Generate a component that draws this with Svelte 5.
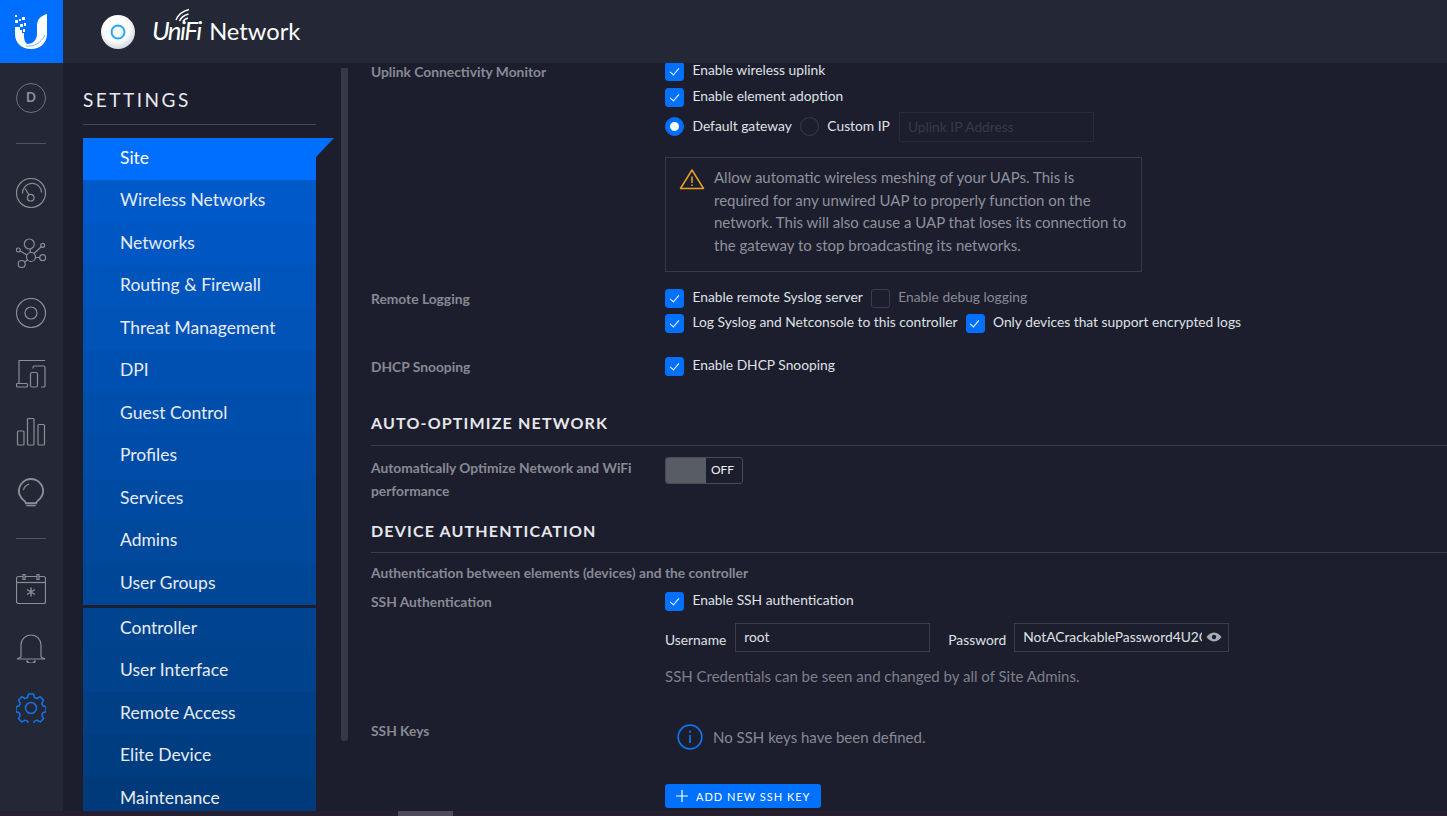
<script>
  const blue = [
    ['Site', '#006fff'],
    ['Wireless Networks', '#0059c8'],
    ['Networks', '#0057c3'],
    ['Routing & Firewall', '#0055bd'],
    ['Threat Management', '#0052b7'],
    ['DPI', '#0050b1'],
    ['Guest Control', '#004eab'],
    ['Profiles', '#004ca6'],
    ['Services', '#004aa1'],
    ['Admins', '#00489b'],
    ['User Groups', '#004696']
  ];
  const lower = [
    ['Controller', '#004490'],
    ['User Interface', '#00428b'],
    ['Remote Access', '#003f85'],
    ['Elite Device', '#003d80'],
    ['Maintenance', '#003a7a']
  ];
</script>

<div class="app">
  <a class="logo" href="#top" aria-label="Home">
    <svg width="64" height="64" viewBox="0 0 64 64">
      <path fill="#fff" d="M15 27h5v3h2v3h2v2c0 5 1 7 3 9C33 44 37 40 37 34v-8c0-6 3-10 10-12v20c0 9-7 15-16 15s-16-6-16-15z" />
      <path fill="none" stroke="#7db5ff" stroke-width="1" d="M26 46c8 1 15-3 19-11" />
      <path fill="#fff" d="M15 15h2v2h-2zM19 19h2v2h-2zM15 20h3v3h-3zM22 17h3v3h-3zM20 24h3v3h-3zM24 23h2v3h-2zM23 29h2v3h-2z" />
    </svg>
  </a>

  <header>
    <svg class="puck" width="36" height="36" viewBox="0 0 36 36">
      <defs>
        <radialGradient id="puck-fill" cx="45%" cy="40%" r="60%">
          <stop offset="0.6" stop-color="#ffffff" />
          <stop offset="1" stop-color="#d5d8df" />
        </radialGradient>
      </defs>
      <circle cx="18" cy="18" r="17" fill="url(#puck-fill)" />
      <circle cx="18" cy="18" r="6.500" fill="#f4f8fc" stroke="#2aa5f2" stroke-width="2" />
    </svg>
    <div class="brand">
      <span class="unifi">UniFi</span>
      <svg class="arcs" width="17" height="14" viewBox="0 0 17 14" fill="none" stroke="#fff" stroke-width="1.600">
        <path d="M1 12c2-5 7-9 13-10.500M4.500 13c1.500-3.500 5-6 9-7M8 13.500c1-1.800 2.800-3 5-3.500" />
      </svg>
      <span class="network">Network</span>
    </div>
  </header>

  <nav class="rail">
    <div class="device">D</div>
    <hr />
    <svg class="ic first" viewBox="0 0 30 30">
      <circle cx="15" cy="15" r="14.500" />
      <path d="M6.500 15.500a9.500 9.500 0 0 1 19.200-1" />
      <path d="M9 10.500l4.200 6.500" />
      <circle cx="14.700" cy="19.700" r="3.300" />
    </svg>
    <svg class="ic" viewBox="0 0 30 30">
      <circle cx="15" cy="19" r="4.500" />
      <circle cx="13.300" cy="6" r="5" />
      <circle cx="26.700" cy="19.700" r="3" />
      <circle cx="26.700" cy="7.300" r="2" />
      <circle cx="2.300" cy="12" r="2" />
      <circle cx="5.700" cy="26" r="3.500" />
      <path d="M14 11l.5 3.500M19.500 19.500h4.200M18 15.500l7.300-6.700M10.800 17L4 12.800M11.500 22L8.500 24" />
    </svg>
    <svg class="ic" viewBox="0 0 30 30">
      <circle cx="15" cy="15" r="14.500" />
      <circle cx="15" cy="15" r="6" />
    </svg>
    <svg class="ic laptop" viewBox="0 0 30 30">
      <path d="M3 25V1.500h26" />
      <rect x="0.500" y="24.500" width="11" height="3.500" rx="1" />
      <rect x="14.500" y="13.500" width="7" height="14.500" rx="1.500" />
      <path d="M17 9.500v-1a1.500 1.500 0 0 1 1.500-1.500h9a1.500 1.500 0 0 1 1.500 1.500v18a1.500 1.500 0 0 1-1.500 1.500h-2.500" />
    </svg>
    <svg class="ic bars" viewBox="0 0 30 30">
      <rect x="1.500" y="14" width="6.500" height="14" rx="1" />
      <rect x="11.500" y="1.500" width="6.500" height="26.500" rx="1" />
      <rect x="22" y="7.500" width="6.500" height="20.500" rx="1" />
    </svg>
    <svg class="ic bulb" viewBox="0 0 30 30">
      <path stroke-width="2" d="M9.500 26c0-3-7.500-5-7.500-13a13 13 0 0 1 26 0c0 8-7.500 10-7.500 13z" />
      <path d="M7 12a8 8 0 0 1 6-6.500" />
      <path d="M10 28.500h10" stroke-width="1.500" />
    </svg>
    <hr class="low" />
    <svg class="ic cal" viewBox="0 0 30 30">
      <rect x="0.500" y="2.500" width="29" height="27" rx="2" />
      <path d="M0.500 8.500h29" />
      <path fill="#242735" d="M7 0.500h2v5h-2zM21 0.500h2v5h-2z" />
      <path stroke-width="1.400" d="M15 13.500v9M11 15.500l8 5M19 15.500l-8 5" />
    </svg>
    <svg class="ic bell" viewBox="0 0 30 30">
      <path d="M5 24V12a10 10 0 0 1 20 0v12l4 2H1z" />
      <path stroke-width="2" d="M11 27.500a4 3 0 0 0 8 0" />
    </svg>
    <svg class="ic gear" viewBox="0 0 30 30">
      <path d="M12.500 1h5l1 3.500 2.500 1 3.200-1.800 3.300 3.400-1.700 3.200 1 2.500 3.200 1v5l-3.200 1-1 2.500 1.700 3.200-3.300 3.400-3.200-1.800-2.500 1-1 3.300h-5l-1-3.300-2.500-1-3.200 1.800-3.300-3.400 1.700-3.200-1-2.500-3.200-1v-5l3.200-1 1-2.500-1.700-3.200 3.300-3.400 3.200 1.800 2.500-1z" stroke-linejoin="round" />
      <circle cx="15" cy="15" r="5.500" />
    </svg>
  </nav>

  <div class="body">
    <aside>
      <h2>SETTINGS</h2>
      <ul class="group">
        {#each blue as [name, bg], i}
          <li class:active={i === 0} style="background:{bg}">{name}</li>
        {/each}
      </ul>
      <ul class="group second">
        {#each lower as [name, bg]}
          <li style="background:{bg}">{name}</li>
        {/each}
      </ul>
    </aside>
    <div class="thumb"></div>

    <main>
      <div class="row first-row">
        <div class="label">Uplink Connectivity Monitor</div>
        <div>
          <div class="line"><span class="cb on"></span><span>Enable wireless uplink</span></div>
          <div class="line"><span class="cb on"></span><span>Enable element adoption</span></div>
          <div class="line radio-line">
            <span class="rd on"></span><span>Default gateway</span>
            <span class="rd"></span><span>Custom IP</span>
            <input class="uplink" placeholder="Uplink IP Address" disabled />
          </div>
          <div class="warn">
            <svg width="26" height="22" viewBox="0 0 26 22" fill="none" stroke="#e8a020" stroke-width="1.500">
              <path d="M13 2L1.500 20.500h23z" stroke-linejoin="round" />
              <path d="M13 8.500v6.500M13 16.500v1.500" />
            </svg>
            <p>Allow automatic wireless meshing of your UAPs. This is required for any unwired UAP to properly function on the network. This will also cause a UAP that loses its connection to the gateway to stop broadcasting its networks.</p>
          </div>
        </div>
      </div>

      <div class="row logging">
        <div class="label">Remote Logging</div>
        <div>
          <div class="line short">
            <span class="cb on"></span><span>Enable remote Syslog server</span>
            <span class="cb"></span><span class="muted">Enable debug logging</span>
          </div>
          <div class="line short">
            <span class="cb on"></span><span>Log Syslog and Netconsole to this controller</span>
            <span class="cb on"></span><span>Only devices that support encrypted logs</span>
          </div>
        </div>
      </div>

      <div class="row dhcp">
        <div class="label">DHCP Snooping</div>
        <div class="line short"><span class="cb on"></span><span>Enable DHCP Snooping</span></div>
      </div>

      <h3 class="optimize">AUTO-OPTIMIZE NETWORK</h3>
      <div class="row opt-row">
        <div class="label tall">Automatically Optimize Network and WiFi performance</div>
        <div class="toggle"><span class="knob"></span><span class="off">OFF</span></div>
      </div>

      <h3 class="auth">DEVICE AUTHENTICATION</h3>
      <div class="label auth-note">Authentication between elements (devices) and the controller</div>
      <div class="row ssh">
        <div class="label">SSH Authentication</div>
        <div>
          <div class="line short"><span class="cb on"></span><span>Enable SSH authentication</span></div>
          <div class="creds">
            <label for="ssh-user">Username</label>
            <input id="ssh-user" class="user" value="root" readonly />
            <label for="ssh-pass" class="pass-label">Password</label>
            <div class="pass-wrap">
              <input id="ssh-pass" class="pass" value="NotACrackablePassword4U2C" readonly />
              <svg class="eye" width="16" height="12" viewBox="0 0 16 12">
                <path fill="#a9abb1" d="M8 1.500c3.500 0 6 2.500 7.500 4.500C14 8 11.500 10.500 8 10.500S2 8 .5 6C2 4 4.500 1.500 8 1.500z" />
                <circle cx="8" cy="6" r="2.200" fill="#1c1e2d" />
              </svg>
            </div>
          </div>
          <div class="hint">SSH Credentials can be seen and changed by all of Site Admins.</div>
        </div>
      </div>

      <div class="row keys">
        <div class="label">SSH Keys</div>
        <div class="empty">
          <svg width="26" height="26" viewBox="0 0 26 26" fill="none" stroke="#0f74ee" stroke-width="1.700">
            <circle cx="13" cy="13" r="11.800" />
            <path d="M13 11v8M13 6.500v2.300" />
          </svg>
          <span>No SSH keys have been defined.</span>
        </div>
      </div>

      <div class="row btn-row">
        <div></div>
        <button>
          <svg width="12" height="12" viewBox="0 0 12 12" stroke="#fff" stroke-width="1.200"><path d="M6 0v12M0 6h12" /></svg>
          ADD NEW SSH KEY
        </button>
      </div>
    </main>
  </div>

  <div class="hbar"><span></span></div>
</div>

<style>
  :global(body) {
    margin: 0;
    background: #1c1e2d;
    overflow: hidden;
  }

  .app {
    display: grid;
    grid-template-columns: 63px 1fr;
    grid-template-rows: 63px 748px 5px;
    width: 1447px;
    height: 816px;
    overflow: hidden;
    font-family: Lato, sans-serif;
    font-size: 13.800px;
    color: #dfe1e5;
  }

  .logo {
    background: #006fff;
    display: block;
    overflow: hidden;
  }

  .logo svg {
    display: block;
  }

  header {
    background: #242735;
    display: flex;
    align-items: center;
    padding-left: 37px;
  }

  .brand {
    position: relative;
    display: flex;
    align-items: baseline;
    margin-left: 16px;
    padding-bottom: 4px;
    color: #fff;
  }

  .unifi {
    font-size: 26px;
    font-style: italic;
    font-weight: 400;
    letter-spacing: -1.600px;
  }

  .arcs {
    position: absolute;
    left: 23px;
    top: -6px;
  }

  .network {
    font-size: 23.700px;
    font-weight: 400;
    margin-left: 8.500px;
  }

  .rail {
    grid-row: 2;
    background: #242735;
    display: flex;
    flex-direction: column;
    align-items: center;
    padding: 20px 1px 0 0;
    box-sizing: border-box;
  }

  .device {
    width: 28px;
    height: 26px;
    border: 1px solid #71747d;
    border-radius: 50%;
    color: #8f929a;
    font-size: 13px;
    font-weight: 700;
    display: flex;
    align-items: center;
    justify-content: center;
    padding-bottom: 2px;
    box-sizing: content-box;
  }

  .rail hr {
    width: 30px;
    border: 0;
    border-top: 1px solid #4f525d;
    margin: 30px 0 0;
  }

  .ic {
    width: 30px;
    height: 30px;
    margin-top: 30px;
    fill: none;
    stroke: #8b8e97;
    stroke-width: 1.200;
    flex: none;
  }

  .ic.first {
    margin-top: 34px;
  }

  .ic.laptop {
    margin-top: 31px;
  }

  .ic.bars {
    margin-top: 28px;
  }

  .ic.bulb {
    margin-top: 31px;
    width: 28px;
  }

  .ic.cal {
    margin-top: 35px;
  }

  .ic.bell {
    margin-top: 29px;
  }

  .ic.gear {
    stroke: #0f74ee;
    stroke-width: 1.500;
  }

  .body {
    display: flex;
    min-width: 0;
    overflow: hidden;
  }

  aside {
    width: 253px;
    flex: none;
    padding-left: 20px;
    box-sizing: border-box;
  }

  h2 {
    margin: 0;
    height: 62px;
    width: 233px;
    box-sizing: border-box;
    padding-top: 25px;
    border-bottom: 1px solid #43464f;
    font-size: 19px;
    line-height: 24px;
    font-weight: 400;
    letter-spacing: 2.500px;
    color: #e8e9ec;
  }

  .group {
    list-style: none;
    margin: 13px 0 0;
    padding: 0;
    width: 233px;
    font-size: 17.500px;
    color: #e6ecf6;
  }

  .group.second {
    margin-top: 3px;
  }

  .group li {
    position: relative;
    height: 42.500px;
    line-height: 40.500px;
    padding-left: 37px;
    box-sizing: border-box;
  }

  .group.second li {
    line-height: 42.500px;
  }

  .group.second li:first-child {
    height: 41px;
    line-height: 39px;
  }

  .group li.active {
    height: 42px;
    color: #fff;
  }

  .active::after {
    content: '';
    position: absolute;
    left: 100%;
    top: 0;
    border-top: 19px solid #006fff;
    border-right: 18px solid transparent;
  }

  .thumb {
    width: 7px;
    height: 673px;
    flex: none;
    margin: 5px 0 0 25px;
    background: #363945;
    border-radius: 0 0 3px 3px;
  }

  main {
    flex: 1;
    min-width: 0;
    padding-left: 23px;
    overflow: hidden;
  }

  .row {
    display: grid;
    grid-template-columns: 294px 1fr;
  }

  .label {
    color: #878a94;
    font-weight: 700;
    line-height: 20px;
  }

  .first-row {
    margin-top: -5px;
  }

  .first-row > .label {
    margin-top: 4px;
  }

  .line {
    display: flex;
    align-items: center;
    height: 26px;
    box-sizing: border-box;
    padding-bottom: 3px;
    white-space: nowrap;
  }

  .line.short {
    height: 25px;
  }

  .line.radio-line {
    height: 32px;
    padding-bottom: 2px;
  }

  .cb {
    width: 19px;
    height: 19px;
    box-sizing: border-box;
    border-radius: 3px;
    border: 1px solid #3a3d48;
    margin: 3px 8.500px 0 0;
    flex: none;
    position: relative;
  }

  .line span + .cb {
    margin-left: 8px;
  }

  .cb.on {
    background: #0070ff;
    border-color: #0070ff;
  }

  .cb.on::after {
    content: '';
    position: absolute;
    left: 5.500px;
    top: 3px;
    width: 4px;
    height: 8px;
    border: solid #fff;
    border-width: 0 1.300px 1.300px 0;
    transform: rotate(40deg);
  }

  .rd {
    width: 19px;
    height: 19px;
    box-sizing: border-box;
    border-radius: 50%;
    border: 1px solid #3a3d48;
    margin: 2px 8.500px 0 0;
    flex: none;
    position: relative;
  }

  .rd.on {
    background: #0070ff;
    border-color: #0070ff;
  }

  .rd.on::after {
    content: '';
    position: absolute;
    left: 4px;
    top: 4px;
    width: 9px;
    height: 9px;
    border-radius: 50%;
    background: #fff;
  }

  .line span + .rd {
    margin-left: 8px;
  }

  .muted {
    color: #878a94;
  }

  input {
    font: inherit;
    background: transparent;
    box-sizing: border-box;
    outline: 0;
    border-radius: 0;
  }

  .uplink {
    width: 195px;
    height: 30px;
    margin: 4px 0 0 9px;
    padding: 0 8px 2px;
    border: 1px solid #272a38;
  }

  .uplink::placeholder {
    color: #373a48;
    opacity: 1;
  }

  .warn {
    width: 477px;
    height: 115px;
    margin-top: 15px;
    box-sizing: border-box;
    border: 1px solid #373a46;
    padding: 8px 10px 0 13px;
    display: flex;
    gap: 9px;
    color: #8f919b;
    font-size: 15px;
    line-height: 22.700px;
  }

  .warn svg {
    flex: none;
    margin-top: 2px;
  }

  .warn p {
    margin: 0;
  }

  .logging {
    margin-top: 13.500px;
  }

  .logging > .label,
  .dhcp > .label,
  .ssh > .label {
    height: 25px;
    line-height: 26px;
  }

  .dhcp {
    margin-top: 18px;
  }

  h3 {
    margin: 0;
    font-size: 16px;
    font-weight: 700;
    letter-spacing: 1.170px;
    line-height: 30px;
    color: #e6e7ea;
    border-bottom: 1px solid #3b3e49;
  }

  .optimize {
    margin-top: 29.500px;
    padding-bottom: 7px;
  }

  .opt-row {
    margin-top: 11px;
    height: 45px;
  }

  .label.tall {
    line-height: 22.500px;
    width: 270px;
  }

  .toggle {
    width: 78px;
    height: 27px;
    box-sizing: border-box;
    border: 1px solid #484b54;
    border-radius: 3px;
    display: flex;
    overflow: hidden;
  }

  .knob {
    width: 40px;
    background: #585c64;
  }

  .off {
    flex: 1;
    text-align: center;
    line-height: 24px;
    padding-right: 3px;
    font-size: 12px;
    color: #f0f1f3;
  }

  .auth {
    margin-top: 14px;
    padding-bottom: 6px;
  }

  .auth-note {
    margin-top: 10px;
  }

  .ssh {
    margin-top: 5.500px;
  }

  .creds {
    display: flex;
    align-items: center;
    margin-top: 9.500px;
  }

  .creds label {
    padding-top: 3px;
  }

  .user {
    width: 195px;
    height: 29px;
    margin-left: 9px;
    padding: 0 8px 3px;
    border: 1px solid #3b3e49;
    color: #dfe1e5;
  }

  .pass-label {
    margin-left: 18px;
  }

  .pass-wrap {
    position: relative;
    margin-left: 8px;
  }

  .pass {
    display: block;
    width: 215px;
    height: 29px;
    padding: 0 26px 3px 8px;
    border: 1px solid #3b3e49;
    color: #dfe1e5;
  }

  .eye {
    position: absolute;
    right: 7px;
    top: 8px;
  }

  .hint {
    margin-top: 14px;
    line-height: 20px;
    color: #7d808a;
    font-size: 15px;
  }

  .keys {
    margin-top: 35px;
  }

  .empty {
    display: flex;
    align-items: center;
    height: 30px;
    margin-top: 1px;
    padding-left: 12px;
    gap: 10px;
    color: #878a94;
    font-size: 15px;
  }

  .btn-row {
    margin-top: 32px;
  }

  button {
    width: 156px;
    height: 24px;
    border: 0;
    border-radius: 3px;
    background: #0070ff;
    color: #fff;
    font: inherit;
    font-size: 11px;
    letter-spacing: 1px;
    display: flex;
    align-items: center;
    gap: 8px;
    padding: 0 0 0 11px;
  }

  .hbar {
    grid-column: 1 / 3;
    background: #251f2f;
    padding-left: 398px;
  }

  .hbar span {
    display: block;
    width: 55px;
    height: 5px;
    background: #4f4a5a;
  }
</style>
